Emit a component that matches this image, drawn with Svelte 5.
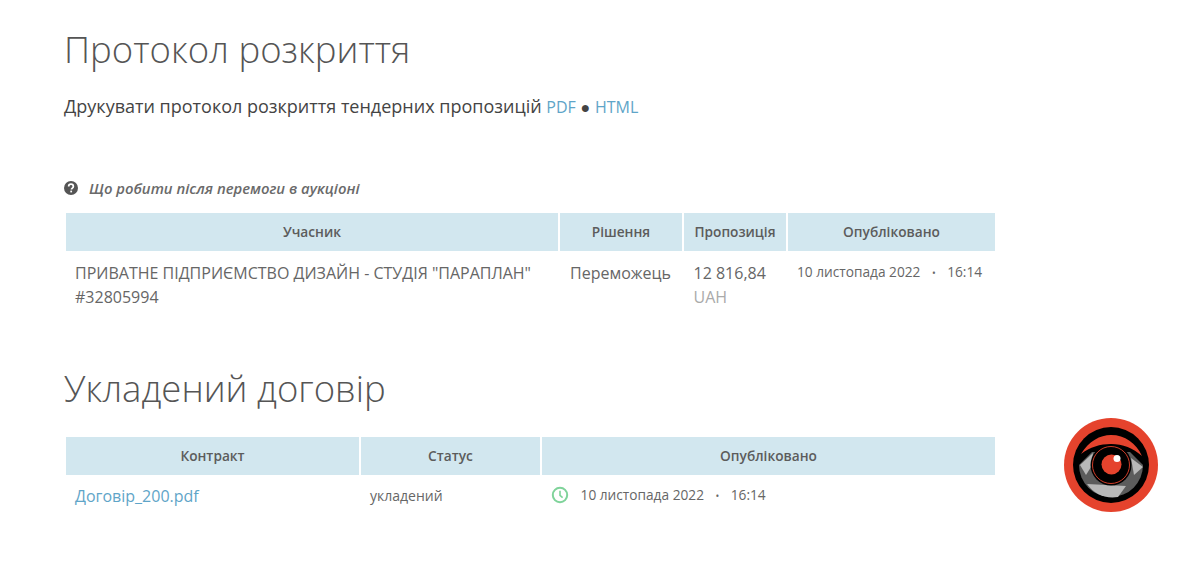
<script>
  const bids = [
    { name: 'ПРИВАТНЕ ПІДПРИЄМСТВО ДИЗАЙН - СТУДІЯ "ПАРАПЛАН"', code: '#32805994', decision: 'Переможець', amount: '12 816,84', currency: 'UAH', date: '10 листопада 2022', time: '16:14' }
  ];
</script>

<main class="page">
  <h2 class="first">Протокол розкриття</h2>
  <p class="print">Друкувати протокол розкриття тендерних пропозицій <a href="#pdf">PDF</a> <span class="sep">●</span> <a href="#html">HTML</a></p>

  <p class="hint">
    <svg class="hint-icon" viewBox="0 0 24 24" width="14" height="14">
      <circle cx="12" cy="12" r="12" fill="#555" />
      <path d="M8 9.5a4 4 0 0 1 8 0c0 2.6-3.2 2.6-3.2 5" fill="none" stroke="#fff" stroke-width="3" />
      <rect x="10.8" y="16.5" width="3" height="3" fill="#fff" />
    </svg>
    <em>Що робити після перемоги в аукціоні</em>
  </p>

  <table class="bids">
    <colgroup>
      <col class="c-member" /><col class="c-decision" /><col class="c-offer" /><col />
    </colgroup>
    <thead>
      <tr><th>Учасник</th><th>Рішення</th><th>Пропозиція</th><th>Опубліковано</th></tr>
    </thead>
    <tbody>
      {#each bids as bid}
        <tr>
          <td>{bid.name}<br />{bid.code}</td>
          <td class="center">{bid.decision}</td>
          <td class="amount">{bid.amount}<br /><span class="currency">{bid.currency}</span></td>
          <td class="date">{bid.date}<span class="dot">•</span>{bid.time}</td>
        </tr>
      {/each}
    </tbody>
  </table>

  <h2 class="second">Укладений договір</h2>

  <table class="contracts">
    <colgroup>
      <col class="c-contract" /><col class="c-status" /><col />
    </colgroup>
    <thead>
      <tr><th>Контракт</th><th>Статус</th><th>Опубліковано</th></tr>
    </thead>
    <tbody>
      <tr>
        <td><a href="#doc">Договір_200.pdf</a></td>
        <td class="status">укладений</td>
        <td class="date">
          <svg class="clock" viewBox="0 0 18 18" width="18" height="18">
            <circle cx="9" cy="9" r="7.2" fill="none" stroke="#7fd39a" stroke-width="2" />
            <path d="M9 4.8V9.4l2.6 2.2" fill="none" stroke="#7fd39a" stroke-width="1.6" />
          </svg>
          10 листопада 2022<span class="dot">•</span>16:14
        </td>
      </tr>
    </tbody>
  </table>

  <!-- watermark logo on top of the page -->
  <svg class="logo" viewBox="0 0 96 96" width="96" height="96">
    <circle cx="48" cy="48" r="47" fill="#e5432d" />
    <circle cx="48" cy="48" r="38" fill="#000" />
    <path d="M18 37C26 24 37 18 48 18c14 0 25 8 31 21C70 31 60 27 48 27c-11 0-21 3-30 10z" fill="#e5432d" />
    <path d="M16 48l13-13h38l13 13a32 32 0 0 1-64 0z" fill="#5c5c5c" />
    <path d="M24 67l39 2-8 11c-13 2-24-3-31-13z" fill="#b8b8b8" />
    <path d="M30 36l-13 12 6 10 5-8z" fill="#b8b8b8" />
    <path d="M68 41l12 9-9 8z" fill="#b8b8b8" />
    <circle cx="48" cy="48" r="20.5" fill="#000" />
    <circle cx="48" cy="48" r="18.5" fill="none" stroke="#e5432d" stroke-width="0.9" />
    <circle cx="48.5" cy="47.5" r="10" fill="#e5432d" />
    <circle cx="54" cy="41.5" r="3.5" fill="#fff" />
  </svg>
</main>

<style>
  :global(body) {
    background: #fff;
  }

  .page {
    position: relative;
    height: 561px;
    overflow: hidden;
    padding: 0 0 0 64px;
    box-sizing: border-box;
    font-family: "Open Sans", sans-serif;
    color: #555;
  }

  h2 {
    margin: 0;
    font-size: 36.5px;
    font-weight: 300;
    line-height: 48px;
    color: #555;
  }

  .first {
    padding-top: 25px;
  }

  .second {
    margin-top: 43px;
  }

  .print {
    margin: 22px 0 0;
    font-size: 18px;
    line-height: 22px;
    color: #444;
  }

  .print a,
  .sep {
    font-size: 16px;
    line-height: 1;
  }

  a {
    color: #5fa5c8;
    text-decoration: none;
  }

  .hint {
    display: flex;
    align-items: center;
    gap: 11px;
    margin: 61px 0 0;
    font-size: 14.85px;
    line-height: 20px;
    font-weight: 600;
    color: #6a6a6a;
  }

  table {
    margin-left: 2px;
    width: 929px;
    table-layout: fixed;
    border-collapse: separate;
    border-spacing: 0;
  }

  .c-member { width: 494px; }
  .c-decision { width: 124px; }
  .c-offer { width: 104px; }
  .c-contract { width: 295px; }
  .c-status { width: 181px; }

  .bids {
    margin-top: 15px;
  }

  .contracts {
    margin-top: 25px;
  }

  th {
    height: 38px;
    padding: 0 0 2px;
    box-sizing: border-box;
    background: #d2e7ef;
    border-right: 2px solid #fff;
    font-size: 13.7px;
    font-weight: 600;
    color: #5c5c5c;
  }

  th:last-child {
    border-right: 0;
  }

  td {
    padding: 11px 10px 12px 9px;
    font-size: 16px;
    line-height: 23.5px;
    vertical-align: top;
    color: #666;
  }

  .contracts td {
    padding-top: 10px;
  }

  .center {
    text-align: center;
    padding-right: 12px;
    padding-left: 9px;
  }

  .amount {
    padding-left: 9.5px;
    white-space: nowrap;
  }

  .currency {
    color: #aaa;
  }

  .date {
    font-size: 13.7px;
    white-space: nowrap;
  }

  .bids .date {
    padding-top: 12px;
    line-height: 18px;
  }

  .contracts .date {
    padding-top: 10px;
    line-height: 20px;
  }

  .dot {
    margin: 0 11.5px;
    font-size: 10px;
  }

  .contracts .status {
    padding-top: 9px;
    font-size: 14px;
  }

  .clock {
    vertical-align: -4px;
    margin-right: 8px;
  }

  .hint-icon {
    flex: none;
  }

  .logo {
    position: absolute;
    left: 1063px;
    top: 417px;
  }
</style>
